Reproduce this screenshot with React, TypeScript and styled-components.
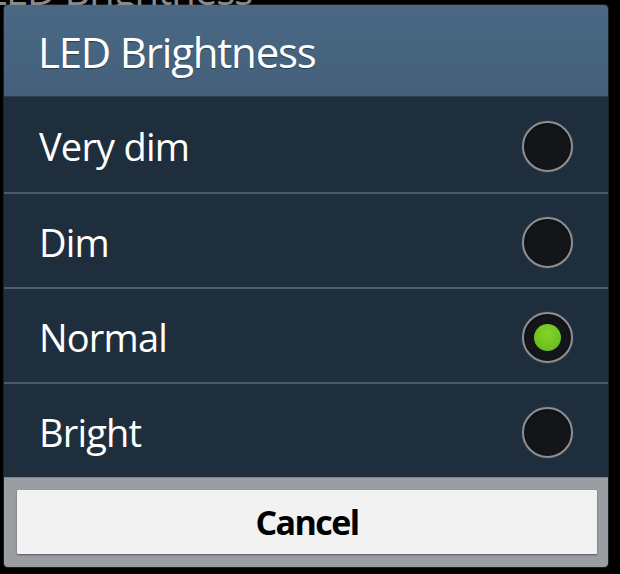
import React, { useState } from "react";
import styled, { createGlobalStyle } from "styled-components";

//* ----- global -----
const GlobalStyle = createGlobalStyle`
    html, body {
        margin: 0;
        padding: 0;
        background: #000;
        width: 620px;
        height: 574px;
        overflow: hidden;
    }
    * {
        box-sizing: border-box;
    }
`;

const options = ["Very dim", "Dim", "Normal", "Bright"];

const App = () => {
    const [selected, setSelected] = useState("Normal");

    return (
        <>
            <GlobalStyle />
            <Screen>
                {/* -----SETTINGS PAGE BEHIND----- */}
                <BackTitle aria-hidden="true">LED Brightness</BackTitle>

                {/* -----DIALOG----- */}
                <Dialog>
                    <Header>LED Brightness</Header>

                    <List>
                        {options.map((name) => (
                            <Row key={name} onClick={() => setSelected(name)}>
                                <Label>{name}</Label>
                                <Radio $checked={selected === name} />
                            </Row>
                        ))}
                    </List>

                    <Footer>
                        <CancelButton>Cancel</CancelButton>
                    </Footer>
                </Dialog>
            </Screen>
        </>
    );
};

//* ----- styled components -----
const Screen = styled.div`
    position: relative;
    width: 620px;
    height: 574px;
    background: #000;
    overflow: hidden;
    font-family: "Open Sans", "Noto Sans", sans-serif;
`;

const BackTitle = styled.div`
    position: absolute;
    left: -14px;
    top: -38px;
    font-size: 40px;
    letter-spacing: -1px;
    color: #8a8a8a;
    white-space: nowrap;
`;

const Dialog = styled.div`
    position: absolute;
    left: 4px;
    top: 5px;
    width: 604px;
    height: 562px;
    display: flex;
    flex-direction: column;
    border-radius: 4px;
    overflow: hidden;
    box-shadow: 0 0 0 1px rgba(120, 130, 140, 0.25);
`;

const Header = styled.div`
    height: 92px;
    flex-shrink: 0;
    display: flex;
    align-items: center;
    padding: 2px 0 0 34px;
    background: linear-gradient(#4a6884, #44607b);
    border-bottom: 1px solid #2c3f52;
    color: #fff;
    font-size: 42px;
    letter-spacing: -1.2px;
    text-shadow: 0 1px 1px rgba(0, 0, 0, 0.4);
`;

const List = styled.div`
    display: flex;
    flex-direction: column;
    background: #1f2e3c;
`;

const Row = styled.div`
    height: 95px;
    display: flex;
    align-items: center;
    justify-content: space-between;
    padding: 0 35px 0 35px;
    cursor: pointer;

    & + & {
        border-top: 2px solid #4a5c6c;
    }
`;

const Label = styled.span`
    color: #fff;
    font-size: 38px;
    letter-spacing: -0.8px;
    padding-top: 2px;
`;

const Radio = styled.span<{ $checked: boolean }>`
    width: 51px;
    height: 51px;
    border-radius: 50%;
    border: 2px solid #8c8f93;
    background: #131519;
    box-shadow: 0 0 0 1px #2a3540, inset 0 1px 2px rgba(0, 0, 0, 0.6);
    display: flex;
    align-items: center;
    justify-content: center;
    margin-top: 4px;

    &::after {
        content: "";
        display: ${(p) => (p.$checked ? "block" : "none")};
        width: 27px;
        height: 27px;
        border-radius: 50%;
        background: radial-gradient(circle at 50% 35%, #86d42a, #5fb51a);
    }
`;

const Footer = styled.div`
    flex: 1;
    background: #9a9ea2;
    border-top: 1px solid #7f8488;
    padding: 12px 11px 13px 13px;
    display: flex;
`;

const CancelButton = styled.button`
    flex: 1;
    border: none;
    border-radius: 1px;
    background: #f2f2f2;
    box-shadow: 0 1px 2px rgba(0, 0, 0, 0.45);
    color: #000;
    font-family: "Open Sans", "Noto Sans", sans-serif;
    font-weight: 700;
    font-size: 34px;
    letter-spacing: -1.6px;
    cursor: pointer;
`;

export default App;
